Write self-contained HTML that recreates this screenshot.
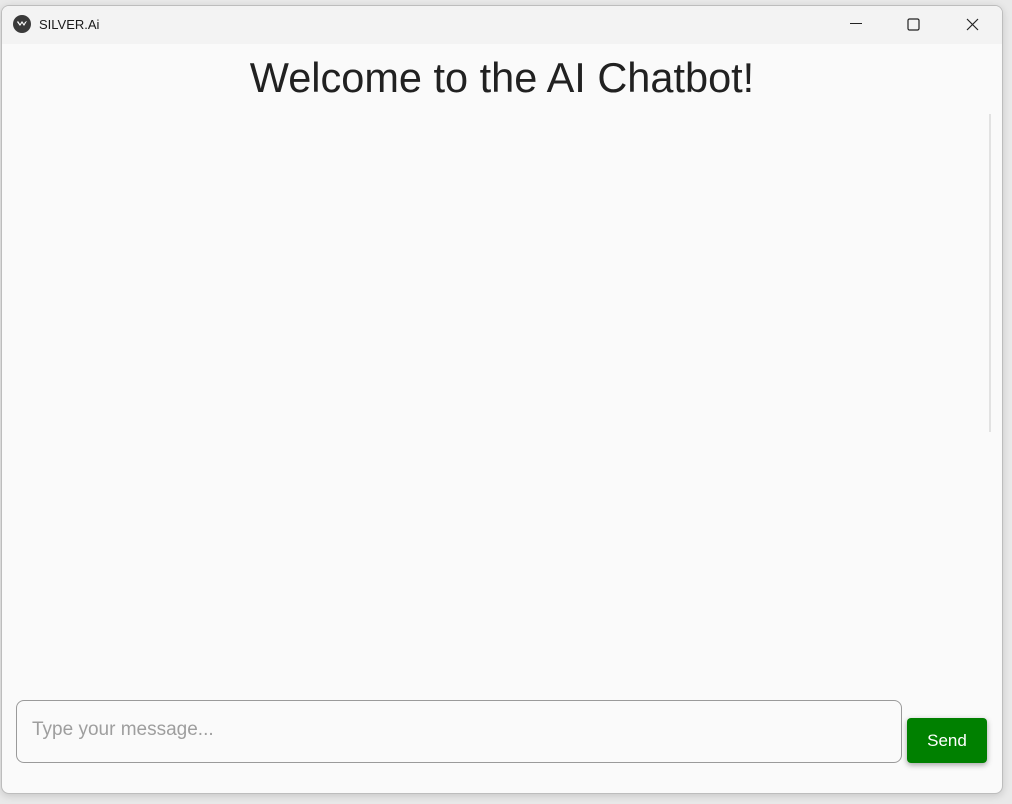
<!DOCTYPE html>
<html><head><meta charset="utf-8"><style>
html,body{margin:0;padding:0;width:1012px;height:804px;background:#e9e9e9;overflow:hidden;font-family:"Liberation Sans",sans-serif}
.win{position:absolute;left:1px;top:5px;width:1000px;height:787px;border:1px solid #bdbdbd;border-radius:8px;background:#fafafa;overflow:hidden;box-shadow:0 2px 8px rgba(0,0,0,.15)}
.tb{position:absolute;left:0;top:0;width:1000px;height:38px;background:#f3f3f3}
.logo{position:absolute;left:11px;top:9px;width:18px;height:18px;border-radius:50%;background:#3a3a3a}
.ttl{position:absolute;left:37px;top:11px;font-size:13px;color:#1a1a1a}
h1{position:absolute;left:0;width:1000px;top:48px;margin:0;text-align:center;font-weight:400;font-size:41.5px;color:#212121}
.sb{position:absolute;left:987px;top:108px;width:2px;height:318px;background:#e2e2e2}
.inp{position:absolute;left:14px;top:694px;border:1.5px solid #9a9a9a;border-radius:8px;box-sizing:border-box;width:886px;height:63px}
.ph{position:absolute;left:15px;top:18px;font-size:19px;color:#9e9e9e}
.send{position:absolute;left:905px;top:712px;width:80px;height:45px;background:#008000;border-radius:4px;color:#fff;font-size:17px;text-align:center;line-height:45px;box-shadow:0 2px 6px rgba(0,0,0,.35)}
</style></head><body>
<div class="win">
<div class="tb">
<div class="logo"><svg width="18" height="18" viewBox="0 0 18 18"><path d="M4 7 L7 11 L9 8 L11 11 L14 6 L12 7 L11 9 L9 6 L7 9 L5 6Z" fill="#fff"/></svg></div>
<div class="ttl">SILVER.Ai</div>
<svg style="position:absolute;left:848px;top:17px" width="12" height="2"><rect width="12" height="1" fill="#222"/></svg>
<svg style="position:absolute;left:905px;top:12px" width="13" height="13"><rect x="1" y="1" width="11" height="11" rx="1.5" fill="none" stroke="#222" stroke-width="1.2"/></svg>
<svg style="position:absolute;left:964px;top:12px" width="13" height="13"><path d="M1 1L12 12M12 1L1 12" stroke="#222" stroke-width="1.2"/></svg>
</div>
<h1>Welcome to the AI Chatbot!</h1>
<div class="sb"></div>
<div class="inp"><div class="ph">Type your message...</div></div>
<div class="send">Send</div>
</div>
</body></html>
